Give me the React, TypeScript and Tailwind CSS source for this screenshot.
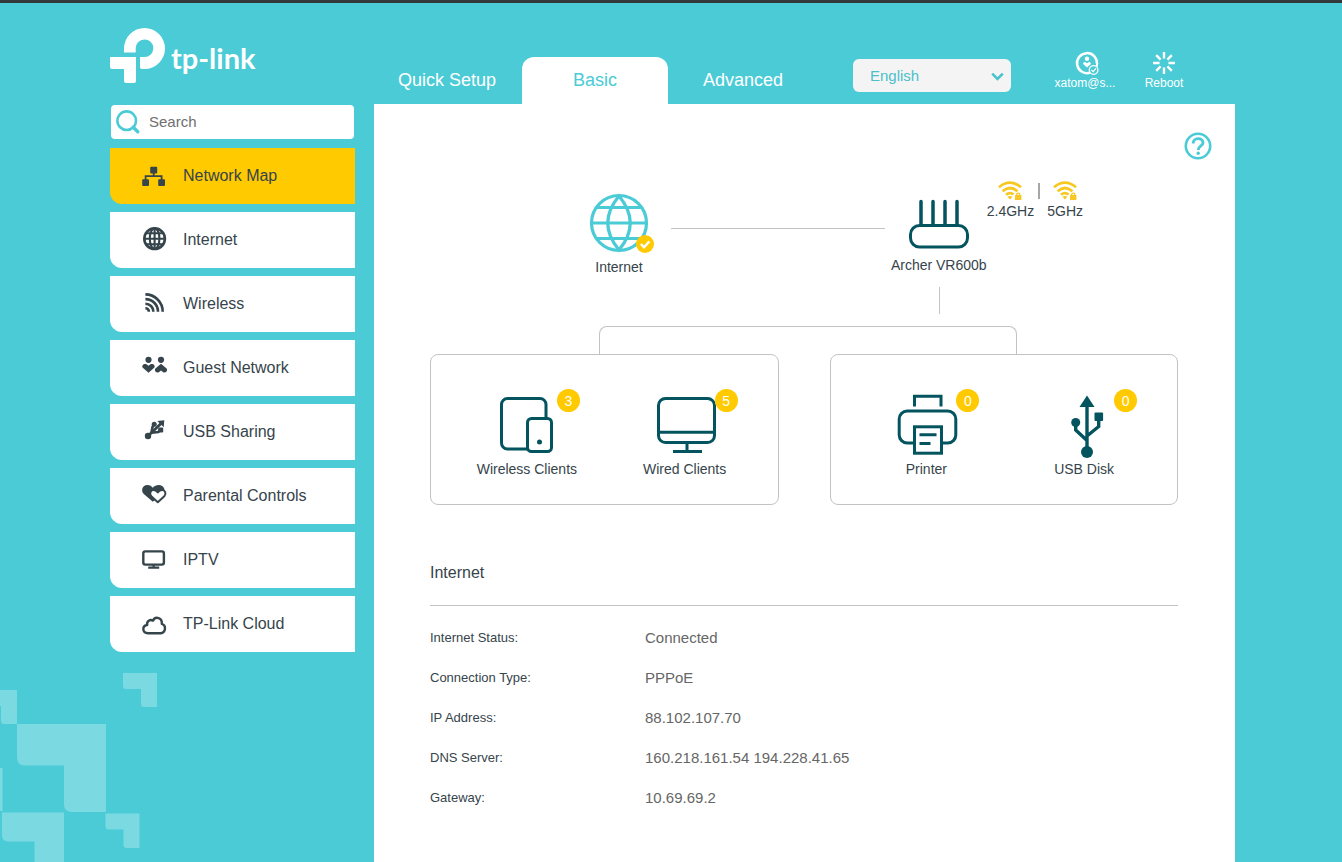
import type { ReactNode } from "react";

const MENU: { label: string; icon: ReactNode }[] = [
  {
    label: "Network Map",
    icon: (
      <>
        <rect x="10.2" y="4.8" width="7" height="6.6" rx="1" fill="currentColor" />
        <rect x="2.2" y="17.2" width="6.8" height="6.8" rx="1" fill="currentColor" />
        <rect x="18.2" y="17.2" width="6.8" height="6.8" rx="1" fill="currentColor" />
        <path d="M13.7 11v3.2M5.6 18v-3.8h16V18" strokeWidth="1.8" />
      </>
    ),
  },
  {
    label: "Internet",
    icon: (
      <>
        <circle cx="14.6" cy="12.7" r="10.3" strokeWidth="2.6" />
        <ellipse cx="14.6" cy="12.7" rx="4.8" ry="10.3" strokeWidth="2.1" />
        <path d="M14.6 2.5v20.4M4.5 12.7h20.2M6 7.2h17.2M6 18.2h17.2" strokeWidth="2.1" />
      </>
    ),
  },
  {
    label: "Wireless",
    icon: (
      <path
        d="M5.4 4.4a17.300 17.300 0 0 1 17.300 17.300M5.400 9.100a12.600 12.600 0 0 1 12.600 12.600M5.400 13.700a8 8 0 0 1 8 8M5.400 18.200a3.500 3.500 0 0 1 3.500 3.500"
        strokeWidth="2.6"
      />
    ),
  },
  {
    label: "Guest Network",
    icon: (
      <>
        <circle cx="8.5" cy="5.8" r="3.1" fill="currentColor" />
        <circle cx="21" cy="5.8" r="3.1" fill="currentColor" />
        <path
          d="M8.500 11.800L6.500 10.300C4 9 1.200 11.600 2.800 13.800L8.500 18.800L14.200 13.800C15.800 11.600 13 9 10.500 10.300Z"
          fill="currentColor"
        />
        <path
          d="M21 9.800L26.600 14.600C28.200 16.800 25.600 19.400 23.200 18.200L21 16.600L18.800 18.200C16.400 19.400 13.800 16.800 15.400 14.600Z"
          fill="currentColor"
        />
      </>
    ),
  },
  {
    label: "USB Sharing",
    icon: (
      <>
        <circle cx="8" cy="18" r="3.2" fill="currentColor" />
        <path d="M8 18L21 5.5" strokeWidth="2.8" />
        <path d="M17.300 3l7-.8-.6 7z" fill="currentColor" />
        <path d="M11.500 14.500l1-5.500 2-3M11.500 14.800l6.800-.8 2.600-2.500" strokeWidth="2.600" />
        <circle cx="14.2" cy="6.2" r="2.5" fill="currentColor" />
        <rect x="18.200" y="9.600" width="5" height="5" rx="1" fill="currentColor" />
      </>
    ),
  },
  {
    label: "Parental Controls",
    icon: (
      <>
        <path
          d="M12.800 19.800L3.800 12C.6 8.600 2.200 3 7.400 3C10 3 11.600 4.200 12.800 5.800C14.200 3.800 16.400 3 18.800 3C23.400 3 25.400 7 24 10L16 17Z"
          fill="currentColor"
        />
        <path
          d="M17.800 20.300L11.300 14.300C8.800 11.300 10.800 8 13.600 8C15.600 8 16.800 9.200 17.800 10.400C18.800 9.200 20 8 22 8C25 8 26.800 11.300 24.300 14.300Z"
          fill="#fff"
          strokeWidth="2"
          strokeLinejoin="round"
        />
      </>
    ),
  },
  {
    label: "IPTV",
    icon: (
      <>
        <rect x="3.3" y="5.4" width="20.6" height="13.2" rx="2" strokeWidth="2.400" />
        <path d="M13.6 18.5v3M8.2 21.7h11" strokeWidth="2.200" />
      </>
    ),
  },
  {
    label: "TP-Link Cloud",
    icon: (
      <path
        d="M8 23.200c-6.200-.4-6-7.600-.8-8.200C6.400 11 10.200 9 13 10.600c2.400-4.800 9.400-2.800 8.800 3.200 4.600 1.400 4.200 8.800-1.200 9.400z"
        strokeWidth="2.400"
        strokeLinejoin="round"
      />
    ),
  },
];

const STATUS: [string, string][] = [
  ["Internet Status:", "Connected"],
  ["Connection Type:", "PPPoE"],
  ["IP Address:", "88.102.107.70"],
  ["DNS Server:", "160.218.161.54 194.228.41.65"],
  ["Gateway:", "10.69.69.2"],
];

function Logo() {
  return (
    <a href="#home" aria-label="tp-link home" className="flex h-14 items-start text-white">
      <svg width="56" height="55" viewBox="0 0 56 55" fill="currentColor" aria-hidden="true">
        <path d="M14 24.500V20.500A20.500 20.500 0 1 1 34.500 41H31.800Q30 41 30 39.200V29H34.500A8.800 8.800 0 1 0 25.700 20.500V24.500Z" />
        <path d="M0 29H26V53Q26 55 24 55H16Q14 55 14 53V41H2Q0 41 0 39Z" />
      </svg>
      <span className="ml-[5px] mt-3 font-['Lato',sans-serif] text-[29px] font-bold leading-9">tp-link</span>
    </a>
  );
}

function Band({ label }: { label: string }) {
  return (
    <div className="flex flex-col items-center">
      <svg width="26" height="20" viewBox="0 0 26 20" fill="none" stroke="#f8c822" aria-hidden="true">
        <path d="M2 6.200Q13 -2.800 24 6.200M5.600 10.200Q13 3.800 20.400 10.200M9 13.800Q13 10.400 16.500 13.600" strokeWidth="2.700" />
        <path d="M10.400 15.800Q13 14 15.400 15.800L13 18.600Z" fill="#f8c822" stroke="none" />
        <rect x="18" y="14" width="6.400" height="5" rx="0.600" fill="#f8c822" stroke="none" />
        <path d="M19.600 14.500v-.8a1.600 1.600 0 0 1 3.200 0v.8" strokeWidth="1.400" />
      </svg>
      <span className="text-sm leading-5">{label}</span>
    </div>
  );
}

function Device({ label, count, children }: { label: string; count: number; children: ReactNode }) {
  return (
    <button type="button" className="flex flex-col items-center">
      <span className="relative">
        <svg
          width="64"
          height="65"
          viewBox="0 0 64 65"
          fill="none"
          stroke="#03545f"
          strokeWidth="3"
          aria-hidden="true"
        >
          {children}
        </svg>
        <span className="absolute -top-[5px] left-[62px] flex size-[23px] items-center justify-center rounded-full bg-[#ffca00] text-sm text-white">
          {count}
        </span>
      </span>
      <span className="text-sm leading-5">{label}</span>
    </button>
  );
}

function Pattern() {
  return (
    <svg
      className="absolute bottom-0 left-0"
      width="160"
      height="192"
      viewBox="0 670 160 192"
      fill="#7bd9e1"
      aria-hidden="true"
    >
      <path d="M123 673H157V707H144Q141 707 141 704V689H126Q123 689 123 686Z" />
      <path d="M0 690H17V724H4Q1 724 1 721V706H0Z" />
      <path d="M17 724H106V812H72Q64 812 64 804V765.500H25Q17 765.500 17 757Z" />
      <path d="M0 768H2.500V811H0Z" />
      <path d="M2 812.500H64V862H34.500V841.500H8Q2 841.500 2 835Z" />
      <path d="M105.500 813.500H139.500V848H127Q123.500 848 123.500 845V829.500H108.500Q105.500 829.500 105.500 826.500Z" />
    </svg>
  );
}

export default function App() {
  return (
    <div className="relative flex min-h-screen flex-col overflow-hidden border-t-[3px] border-[#33393b] bg-[#4acbd6] pl-[3px] font-['Liberation_Sans',Arial,sans-serif] text-[#36444b]">
      <Pattern />
      <div className="relative mx-auto flex w-full max-w-[1125px] flex-1 gap-[19px]">
        <aside className="w-[245px] shrink-0 pt-[25px]">
          <Logo />
          <div className="relative mx-px mt-[21px]">
            <svg
              className="pointer-events-none absolute left-[5px] top-[5px]"
              width="25"
              height="25"
              viewBox="0 0 25 25"
              fill="none"
              stroke="#4acbd6"
              aria-hidden="true"
            >
              <circle cx="10.700" cy="10.700" r="9.300" strokeWidth="2.600" />
              <path d="M17.200 17.200L21.800 21.800" strokeWidth="3.400" strokeLinecap="round" />
            </svg>
            <input
              type="text"
              aria-label="Search"
              placeholder="Search"
              className="block h-[34px] w-full rounded bg-white pb-[2px] pl-[38px] pr-3 text-[15px] outline-none placeholder:text-[#707070]"
            />
          </div>
          <nav className="mt-[9px] flex flex-col gap-2">
            {MENU.map((item, i) => (
              <a
                key={item.label}
                href="#menu"
                className={`flex h-14 items-center gap-[15px] rounded-bl-xl pl-[30px] text-base ${
                  i === 0 ? "bg-[#ffca00]" : "bg-white"
                }`}
              >
                <svg
                  width="28"
                  height="28"
                  viewBox="0 0 28 28"
                  fill="none"
                  stroke="currentColor"
                  strokeWidth="0"
                  aria-hidden="true"
                >
                  {item.icon}
                </svg>
                {item.label}
              </a>
            ))}
          </nav>
        </aside>

        <div className="flex min-w-0 flex-1 flex-col">
          <header className="flex h-[101px] items-end">
            <nav className="flex gap-[2px] text-lg">
              <a href="#quick" className="flex h-[47px] w-[146px] items-center justify-center pb-[2px] text-white">
                Quick Setup
              </a>
              <a
                href="#basic"
                className="flex h-[47px] w-[146px] items-center justify-center rounded-t-xl bg-white pb-[2px] text-[#4acbd6]"
              >
                Basic
              </a>
              <a href="#advanced" className="flex h-[47px] w-[146px] items-center justify-center pb-[2px] text-white">
                Advanced
              </a>
            </nav>
            <div className="relative mb-3 ml-[37px]">
              <select
                aria-label="Language"
                className="block h-[33px] w-[158px] appearance-none rounded-md bg-[#f4f4f4] pl-[17px] pt-[2px] text-[15px] text-[#4bbfcb] outline-none"
              >
                <option>English</option>
              </select>
              <svg
                className="pointer-events-none absolute right-[7px] top-[13px]"
                width="13"
                height="10"
                viewBox="0 0 13 10"
                fill="none"
                stroke="#4bc3cf"
                strokeWidth="2.600"
                aria-hidden="true"
              >
                <path d="M1.200 1.600L6.500 7L11.800 1.600" />
              </svg>
            </div>
            <div className="mb-[14px] ml-auto mr-[51px] flex gap-[27px] text-xs leading-[14px] text-white">
              <button type="button" className="flex w-16 flex-col items-center">
                <svg
                  width="24"
                  height="25"
                  viewBox="0 0 24 25"
                  fill="none"
                  stroke="currentColor"
                  className="ml-1"
                  aria-hidden="true"
                >
                  <path d="M15.200 21.600A10 10 0 1 1 22 12.800" strokeWidth="2.500" />
                  <path d="M22 12.400V15.500" strokeWidth="2" />
                  <circle cx="12" cy="7.800" r="2.200" fill="currentColor" stroke="none" />
                  <path
                    d="M12 16.600L8.400 13.300C7.600 12 9 10.600 10.400 11.200L12 12.300L13.600 11.200C15 10.600 16.400 12 15.600 13.300Z"
                    fill="currentColor"
                    stroke="none"
                  />
                  <circle cx="18.600" cy="19" r="4.300" strokeWidth="1.300" />
                  <path d="M16.400 18.800L18.200 20.600L21 17.400" strokeWidth="1.200" />
                </svg>
                xatom@s...
              </button>
              <button type="button" className="flex w-10 flex-col items-center">
                <svg
                  width="24"
                  height="25"
                  viewBox="0 0 24 25"
                  fill="none"
                  stroke="currentColor"
                  strokeWidth="2.400"
                  aria-hidden="true"
                >
                  <path d="M12 1V7.500M12 16.500V23M1 12H7.500M16.500 12H23M4.200 4.200L8.600 8.600M15.400 15.400L19.800 19.800M4.200 19.800L8.600 15.400M15.400 8.600L19.800 4.200" />
                </svg>
                Reboot
              </button>
            </div>
          </header>

          <main className="flex-1 bg-white pb-5 pt-7">
            <div className="flex justify-end pr-[23px]">
              <button type="button" aria-label="Help">
                <svg width="28" height="28" viewBox="0 0 28 28" fill="none" stroke="#4acbd6" aria-hidden="true">
                  <circle cx="14" cy="14" r="12.200" strokeWidth="2.600" />
                  <path
                    d="M9.200 11.400C9.200 5.200 19 5.200 19 10.800C19 14 14.200 14 14.200 18"
                    strokeWidth="2.900"
                  />
                  <circle cx="14.200" cy="21.200" r="1.700" fill="#4acbd6" stroke="none" />
                </svg>
              </button>
            </div>

            <div className="ml-14 mr-[57px]">
              <section aria-label="Network map" className="flex flex-col pt-[21px]">
                <div className="flex items-start pl-[159px] pr-[95px]">
                  <button type="button" className="mt-3 flex w-[60px] flex-col items-center">
                    <svg
                      width="60"
                      height="60"
                      viewBox="0 0 60 60"
                      fill="none"
                      stroke="#4acbd6"
                      strokeWidth="3.200"
                      className="overflow-visible"
                      aria-hidden="true"
                    >
                      <circle cx="30" cy="30" r="27.500" />
                      <path d="M30 3Q7.500 30 30 57Q52.500 30 30 3ZM7.500 14.500H52.500M2.500 30H57.500M7.500 45.500H52.500" />
                      <circle cx="56" cy="51" r="9" fill="#ffca00" stroke="none" />
                      <path d="M51.800 51L55 54.200L60.400 48.400" stroke="#fff" strokeWidth="2.400" />
                    </svg>
                    <span className="mt-1 text-sm leading-5">Internet</span>
                  </button>
                  <div className="ml-[22px] mr-[6px] mt-[47px] h-px flex-1 bg-[#c3c3c3]" />
                  <button type="button" className="mt-[18px] flex w-24 flex-col items-center whitespace-nowrap">
                    <svg
                      width="64"
                      height="52"
                      viewBox="0 0 64 52"
                      fill="none"
                      stroke="#03545f"
                      strokeWidth="3"
                      aria-hidden="true"
                    >
                      <path d="M14 2.500V26M26 2.500V26M38 2.500V26M50 2.500V26" strokeWidth="3.500" strokeLinecap="round" />
                      <rect x="3.500" y="26.500" width="57" height="21.500" rx="9" />
                    </svg>
                    <span className="mt-1 text-sm leading-5">Archer VR600b</span>
                  </button>
                  <div className="flex">
                    <Band label="2.4GHz" />
                    <div className="ml-1 mr-[7px] mt-[2px] h-4 w-[2px] bg-[#a6a6a6]" />
                    <Band label="5GHz" />
                  </div>
                </div>

                <div className="mr-[238px] mt-[10px] h-[27px] w-px self-end bg-[#c3c3c3]" />
                <div className="ml-[169px] mr-[161px] mt-3 h-7 rounded-t-lg border border-b-0 border-[#c3c3c3]" />

                <div className="grid grid-cols-2 gap-[51px]">
                  <div className="grid h-[151px] grid-cols-2 items-start rounded-lg border border-[#c3c3c3] pl-[17px] pr-[14px] pt-[39px]">
                    <Device label="Wireless Clients" count={3}>
                      <rect x="6.500" y="4.500" width="44.500" height="50.500" rx="6" />
                      <rect x="32.500" y="24.500" width="24" height="33" rx="4" fill="#fff" />
                      <circle cx="44.500" cy="48" r="2.500" fill="#03545f" stroke="none" />
                    </Device>
                    <Device label="Wired Clients" count={5}>
                      <rect x="5.500" y="4.500" width="56" height="44" rx="7" />
                      <path d="M5.500 38.300H61.500M34 49V57M20 57.500H49" />
                    </Device>
                  </div>
                  <div className="grid h-[151px] grid-cols-2 items-start rounded-lg border border-[#c3c3c3] pl-[17px] pr-[14px] pt-[39px]">
                    <Device label="Printer" count={0}>
                      <path d="M20.500 12.500V2.200H47V12.500" />
                      <rect x="5.200" y="17" width="56.600" height="32" rx="8" />
                      <rect x="20.500" y="32.800" width="27" height="26.400" fill="#fff" />
                      <path d="M25.500 40.800H42.500M25.500 49.500H36.500" />
                    </Device>
                    <Device label="USB Disk" count={0}>
                      <path d="M35 10V55M23.700 30V36L35 46.500M46.700 26V32.500L35 42" strokeWidth="3.400" />
                      <path d="M35 1.500L42.500 13H27.500Z" fill="#03545f" stroke="none" />
                      <circle cx="35" cy="58" r="6" fill="#03545f" stroke="none" />
                      <circle cx="23.700" cy="28.500" r="4.500" fill="#03545f" stroke="none" />
                      <rect x="42.500" y="18.500" width="8.600" height="8.600" rx="1" fill="#03545f" stroke="none" />
                    </Device>
                  </div>
                </div>
              </section>

              <section aria-label="Internet status" className="mt-14">
                <h2 className="border-b border-[#c3c3c3] pb-5 text-base">Internet</h2>
                <table className="mt-3 w-full text-left">
                  <tbody>
                    {STATUS.map(([label, value]) => (
                      <tr key={label} className="h-10">
                        <th scope="row" className="w-[215px] text-[13px] font-normal">
                          {label}
                        </th>
                        <td className="text-[15px] text-[#666]">{value}</td>
                      </tr>
                    ))}
                  </tbody>
                </table>
              </section>
            </div>
          </main>
        </div>
      </div>
    </div>
  );
}
